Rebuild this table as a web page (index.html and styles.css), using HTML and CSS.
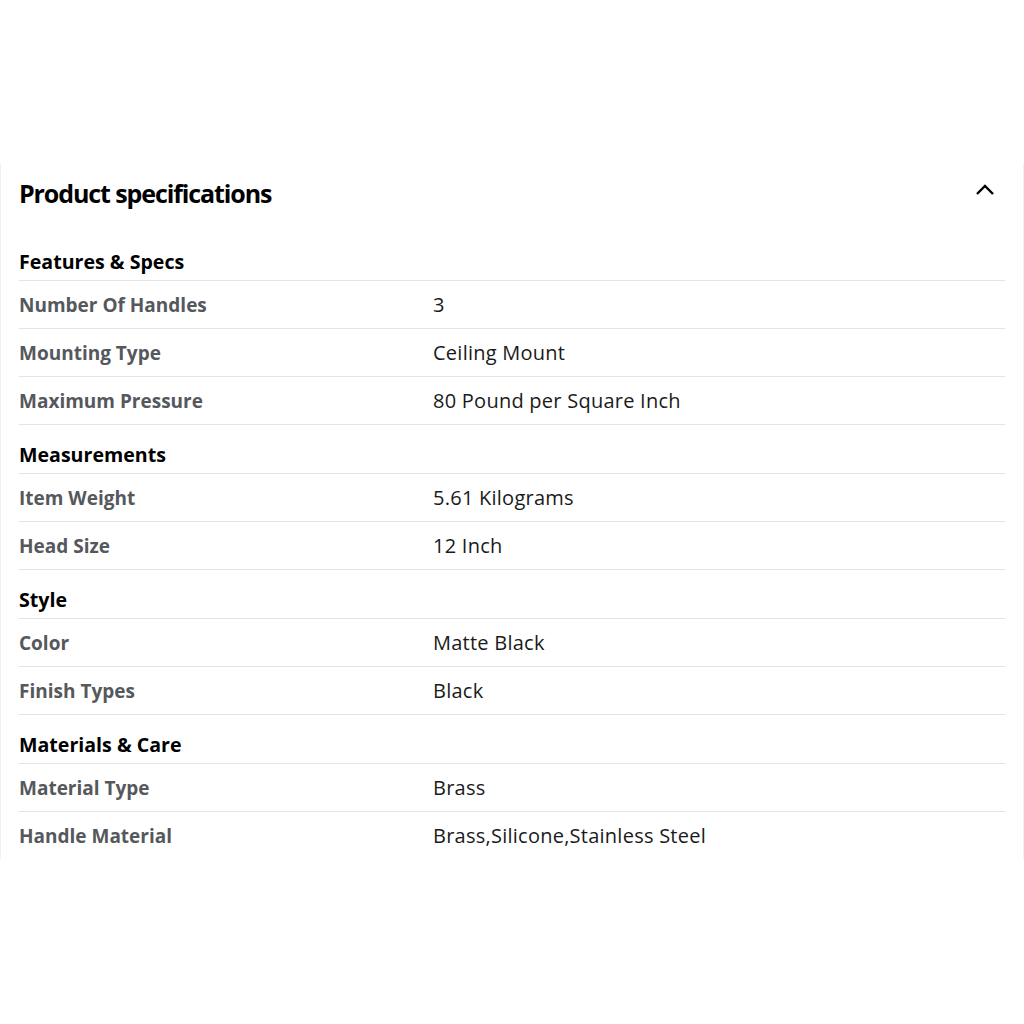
FILE: index.html
```html
<!DOCTYPE html>
<html lang="en">
<head>
  <meta charset="UTF-8">
  <title>Product specifications</title>
  <link rel="stylesheet" href="styles.css">
</head>
<body>
  <section class="specs">
    <div class="specs-head">
      <h2>Product specifications</h2>
      <button class="toggle" aria-label="Collapse">
        <svg width="20" height="20" viewBox="0 0 20 20"><polyline points="2,14 10,6 18,14" fill="none" stroke="#000" stroke-width="2.4"/></svg>
      </button>
    </div>

    <div class="group">Features &amp; Specs</div>
    <div class="row"><span class="label">Number Of Handles</span><span class="value">3</span></div>
    <div class="row"><span class="label">Mounting Type</span><span class="value">Ceiling Mount</span></div>
    <div class="row"><span class="label">Maximum Pressure</span><span class="value">80 Pound per Square Inch</span></div>

    <div class="group">Measurements</div>
    <div class="row"><span class="label">Item Weight</span><span class="value">5.61 Kilograms</span></div>
    <div class="row"><span class="label">Head Size</span><span class="value">12 Inch</span></div>

    <div class="group">Style</div>
    <div class="row"><span class="label">Color</span><span class="value">Matte Black</span></div>
    <div class="row"><span class="label">Finish Types</span><span class="value">Black</span></div>

    <div class="group">Materials &amp; Care</div>
    <div class="row"><span class="label">Material Type</span><span class="value">Brass</span></div>
    <div class="row last"><span class="label">Handle Material</span><span class="value">Brass,Silicone,Stainless Steel</span></div>
  </section>
</body>
</html>
```

FILE: styles.css
```css
* {
  margin: 0;
  padding: 0;
  box-sizing: border-box;
}

body {
  font-family: 'Open Sans', 'Noto Sans', sans-serif;
  background: #ffffff;
  color: #1a1a1a;
}

.specs {
  margin-top: 164px;
  padding: 0 18px 0 18px;
  border-left: 1px solid #f0f0f0;
  border-right: 1px solid #f0f0f0;
  height: 695px;
}

.specs-head {
  display: flex;
  justify-content: space-between;
  align-items: center;
  height: 68px;
  padding-bottom: 10px;
}

.specs-head h2 {
  font-size: 25px;
  font-weight: 700;
  letter-spacing: -1.1px;
  color: #000;
}

.toggle {
  background: transparent;
  border: none;
  width: 20px;
  height: 20px;
  margin-right: 10px;
  margin-top: -6px;
}

.group {
  font-size: 19.6px;
  font-weight: 700;
  line-height: 24px;
  color: #000;
  padding: 18px 0 6px;
  border-bottom: 1px solid #e3e4e5;
}

.row {
  display: flex;
  font-size: 19px;
  line-height: 24px;
  padding: 12px 0 11px;
  border-bottom: 1px solid #e3e4e5;
}

.row.last {
  border-bottom: none;
}

.label {
  width: 414px;
  font-weight: 700;
  color: #55585c;
}

.value {
  font-size: 20px;
  letter-spacing: 0.25px;
  color: #1a1a1a;
}
```
